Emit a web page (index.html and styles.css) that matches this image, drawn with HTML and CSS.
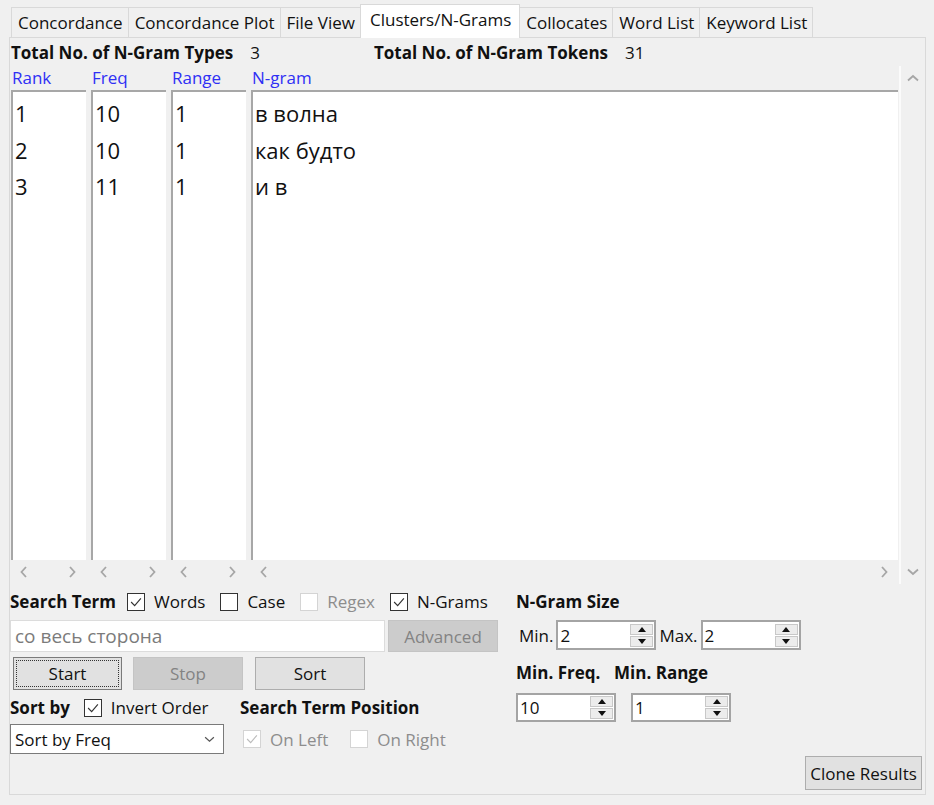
FILE: index.html
```html
<!DOCTYPE html>
<html>
<head>
<meta charset="utf-8">
<title>Clusters/N-Grams</title>
<link rel="stylesheet" href="styles.css">
</head>
<body>
<div class="app">
  <div class="tabs">
    <div class="tab">Concordance</div>
    <div class="tab">Concordance Plot</div>
    <div class="tab">File View</div>
    <div class="tab active">Clusters/N-Grams</div>
    <div class="tab">Collocates</div>
    <div class="tab">Word List</div>
    <div class="tab">Keyword List</div>
  </div>

  <div class="panel">
    <div class="stats">
      <div class="stat stat-types"><span class="b">Total No. of N-Gram Types</span><span>3</span></div>
      <div class="stat"><span class="b">Total No. of N-Gram Tokens</span><span>31</span></div>
    </div>

    <div class="results">
      <div class="col col-narrow">
        <div class="colhead">Rank</div>
        <div class="list">
          <div class="row">1</div><div class="row">2</div><div class="row">3</div>
        </div>
        <div class="hscroll">
          <svg class="chev" viewBox="0 0 8 12"><path d="M6 1L1.5 6L6 11"/></svg>
          <svg class="chev" viewBox="0 0 8 12"><path d="M2 1L6.5 6L2 11"/></svg>
        </div>
      </div>
      <div class="col col-narrow">
        <div class="colhead">Freq</div>
        <div class="list">
          <div class="row">10</div><div class="row">10</div><div class="row">11</div>
        </div>
        <div class="hscroll">
          <svg class="chev" viewBox="0 0 8 12"><path d="M6 1L1.5 6L6 11"/></svg>
          <svg class="chev" viewBox="0 0 8 12"><path d="M2 1L6.5 6L2 11"/></svg>
        </div>
      </div>
      <div class="col col-narrow">
        <div class="colhead">Range</div>
        <div class="list">
          <div class="row">1</div><div class="row">1</div><div class="row">1</div>
        </div>
        <div class="hscroll">
          <svg class="chev" viewBox="0 0 8 12"><path d="M6 1L1.5 6L6 11"/></svg>
          <svg class="chev" viewBox="0 0 8 12"><path d="M2 1L6.5 6L2 11"/></svg>
        </div>
      </div>
      <div class="col col-wide">
        <div class="colhead">N-gram</div>
        <div class="list">
          <div class="row">в волна</div><div class="row">как будто</div><div class="row">и в</div>
        </div>
        <div class="hscroll">
          <svg class="chev" viewBox="0 0 8 12"><path d="M6 1L1.5 6L6 11"/></svg>
          <svg class="chev" viewBox="0 0 8 12"><path d="M2 1L6.5 6L2 11"/></svg>
        </div>
      </div>
      <div class="vscroll">
        <svg class="vchev" viewBox="0 0 12 8"><path d="M1 6.5L6 2L11 6.5"/></svg>
        <svg class="vchev" viewBox="0 0 12 8"><path d="M1 1.5L6 6L11 1.5"/></svg>
      </div>
    </div>

    <div class="controls">
      <div class="left">
        <div class="line line-search">
          <span class="b">Search Term</span>
          <label class="check on"><span class="box"><svg viewBox="0 0 18 18"><path d="M3.5 9L7.5 13L14.5 5"/></svg></span>Words</label>
          <label class="check"><span class="box"></span>Case</label>
          <label class="check disabled"><span class="box"></span>Regex</label>
          <label class="check on"><span class="box"><svg viewBox="0 0 18 18"><path d="M3.5 9L7.5 13L14.5 5"/></svg></span>N-Grams</label>
        </div>
        <div class="line line-input">
          <div class="textbox">со весь сторона</div>
          <div class="btn btn-disabled btn-adv">Advanced</div>
        </div>
        <div class="line line-buttons">
          <div class="btn btn-focus"><span class="focusring">Start</span></div>
          <div class="btn btn-disabled">Stop</div>
          <div class="btn">Sort</div>
        </div>
        <div class="line line-sort">
          <div class="sortgroup">
            <span class="b">Sort by</span>
            <label class="check on"><span class="box"><svg viewBox="0 0 18 18"><path d="M3.5 9L7.5 13L14.5 5"/></svg></span>Invert Order</label>
          </div>
          <span class="b">Search Term Position</span>
        </div>
        <div class="line line-select">
          <div class="select">Sort by Freq<svg class="selchev" viewBox="0 0 12 8"><path d="M1 1.5L6 6L11 1.5"/></svg></div>
          <label class="check on disabled"><span class="box"><svg viewBox="0 0 18 18"><path d="M3.5 9L7.5 13L14.5 5"/></svg></span>On Left</label>
          <label class="check disabled"><span class="box"></span>On Right</label>
        </div>
      </div>

      <div class="right">
        <div class="line line-title"><span class="b">N-Gram Size</span></div>
        <div class="line line-size">
          <span class="lbl">Min.</span>
          <div class="spin"><span class="val">2</span><span class="arrows"><span class="arr up"></span><span class="arr down"></span></span></div>
          <span class="lbl">Max.</span>
          <div class="spin"><span class="val">2</span><span class="arrows"><span class="arr up"></span><span class="arr down"></span></span></div>
        </div>
        <div class="line line-title2">
          <span class="b lbl-freq">Min. Freq.</span>
          <span class="b">Min. Range</span>
        </div>
        <div class="line line-min">
          <div class="spin"><span class="val">10</span><span class="arrows"><span class="arr up"></span><span class="arr down"></span></span></div>
          <div class="spin"><span class="val">1</span><span class="arrows"><span class="arr up"></span><span class="arr down"></span></span></div>
        </div>
      </div>
    </div>

    <div class="footer">
      <div class="btn btn-clone">Clone Results</div>
    </div>
  </div>
</div>
</body>
</html>
```

FILE: styles.css
```css
* { box-sizing: border-box; }

html, body {
  margin: 0;
  padding: 0;
  background: #f0f0f0;
}

body {
  font-family: "Open Sans", "Noto Sans", "DejaVu Sans", sans-serif;
  font-size: 17px;
  color: #111;
  width: 934px;
  height: 805px;
  overflow: hidden;
}

.app {
  padding: 0 8px 0 9px;
}

.b {
  font-weight: 700;
  white-space: nowrap;
  flex: none;
}

/* ---------- tabs ---------- */
.tabs {
  display: flex;
  align-items: flex-end;
  height: 37px;
  padding-left: 2px;
}

.tab {
  height: 30px;
  padding: 0 5px 0 6px;
  line-height: 30px;
  border: 1px solid #d9d9d9;
  border-bottom: none;
  border-right: none;
  background: #f0f0f0;
  white-space: nowrap;
}

.tab:last-child { border-right: 1px solid #d9d9d9; }

.tab.active {
  height: 34px;
  line-height: 29px;
  background: #fff;
  border-color: #d9d9d9;
  border-right: 1px solid #d9d9d9;
  margin-bottom: -1px;
  position: relative;
  z-index: 1;
  padding: 0 8px 4px 9px;
}

.tab.active + .tab { border-left: none; }

/* ---------- panel ---------- */
.panel {
  height: 758px;
  border: 1px solid #d9d9d9;
  display: flex;
  flex-direction: column;
}

.stats {
  display: flex;
  height: 28px;
  align-items: center;
  padding-left: 1px;
}

.stat {
  display: flex;
  gap: 17px;
}

.stat-types { width: 363px; }

/* ---------- results ---------- */
.results {
  display: flex;
  padding-left: 1px;
  height: 518px;
}

.col {
  display: flex;
  flex-direction: column;
  margin-right: 5px;
}

.col-narrow { width: 75px; }
.col-wide { width: 647px; margin-right: 1px; }

.colhead {
  height: 24px;
  line-height: 24px;
  color: #2f2ff5;
  padding-left: 1px;
}

.list {
  flex: 1;
  background: #fff;
  border-top: 2px solid #a7a7a7;
  border-left: 2px solid #a7a7a7;
  padding-top: 3px;
  padding-left: 2px;
  font-size: 22px;
}

.row {
  height: 36.5px;
  line-height: 36px;
  white-space: nowrap;
}

.hscroll {
  height: 24px;
  display: flex;
  justify-content: space-between;
  align-items: center;
  padding: 0 10px 0 9px;
}

.chev {
  width: 8px;
  height: 12px;
  fill: none;
  stroke: #a6a6a6;
  stroke-width: 1.8;
}

.vscroll {
  width: 25px;
  border-left: 2px solid #fbfbfb;
  display: flex;
  flex-direction: column;
  justify-content: space-between;
  align-items: center;
  padding: 8px 0 8px 0;
}

.vchev {
  width: 12px;
  height: 8px;
  fill: none;
  stroke: #a6a6a6;
  stroke-width: 1.8;
}

/* ---------- controls ---------- */
.controls {
  display: flex;
  padding-top: 7px;
}

.left {
  width: 489px;
  flex: none;
  display: flex;
  flex-direction: column;
}

.right {
  margin-left: 17px;
  display: flex;
  flex-direction: column;
}

.line {
  display: flex;
  align-items: center;
}

.line-search { height: 21px; }
.line-search .b { margin-right: 11px; }
.line-search .check { margin-right: 15px; }

.check {
  display: inline-flex;
  align-items: center;
  gap: 9px;
  white-space: nowrap;
  flex: none;
}

.box {
  width: 18px;
  height: 18px;
  border: 1px solid #333;
  background: #fff;
  display: inline-flex;
  flex: none;
}

.box svg {
  width: 16px;
  height: 16px;
  fill: none;
  stroke: #333;
  stroke-width: 1.3;
}

.check.disabled { color: #8d8d8d; }
.check.disabled .box { border-color: #d4d4d4; }
.check.disabled .box svg { stroke: #bcbcbc; }

.line-input {
  margin-top: 8px;
  height: 32px;
  gap: 3px;
}

.textbox {
  width: 375px;
  height: 32px;
  background: #fff;
  border: 1px solid #dcdcdc;
  color: #7b7b7b;
  font-size: 19px;
  line-height: 30px;
  padding-left: 4px;
  white-space: nowrap;
}

.btn {
  height: 33px;
  width: 110px;
  background: #e1e1e1;
  border: 1px solid #adadad;
  display: flex;
  align-items: center;
  justify-content: center;
  white-space: nowrap;
  flex: none;
}

.btn-disabled {
  background: #cccccc;
  border-color: #c4c4c4;
  color: #838383;
}

.btn-adv { height: 32px; }

.line-buttons {
  margin-top: 5px;
  height: 33px;
  gap: 11px;
  padding-left: 3px;
}

.line-buttons .btn:nth-child(2) { margin-right: 1px; }

.btn-focus {
  width: 109px;
  border-color: #7a7a7a;
  padding: 2px;
}

.focusring {
  width: 100%;
  height: 100%;
  border: 1px dotted #333;
  display: flex;
  align-items: center;
  justify-content: center;
}

.line-sort {
  margin-top: 7px;
  height: 21px;
}

.sortgroup {
  width: 230px;
  display: flex;
  align-items: center;
  gap: 14px;
}

.line-select {
  margin-top: 6px;
  height: 30px;
}

.select {
  width: 214px;
  height: 30px;
  border: 1px solid #7a7a7a;
  background: #fff;
  display: flex;
  align-items: center;
  justify-content: space-between;
  padding: 0 8px 0 4px;
  margin-right: 19px;
  white-space: nowrap;
  flex: none;
}

.selchev {
  width: 11px;
  height: 7px;
  fill: none;
  stroke: #555;
  stroke-width: 1.4;
}

.line-select .check { margin-right: 22px; }

/* ---------- right side ---------- */
.line-title { height: 21px; }

.line-size {
  margin-top: 8px;
  height: 30px;
  gap: 3px;
  padding-left: 3px;
}

.spin {
  width: 100px;
  height: 30px;
  border: 2px solid #a4a4a4;
  background: #fff;
  display: flex;
  align-items: center;
  justify-content: space-between;
  padding-left: 2px;
  flex: none;
}

.arrows {
  display: flex;
  flex-direction: column;
  gap: 1px;
  margin-right: 1px;
}

.arr {
  width: 23px;
  height: 11px;
  background: #ececec;
  border: 1px solid #c8c8c8;
  display: flex;
  align-items: center;
  justify-content: center;
}

.arr::after {
  content: "";
  width: 0;
  height: 0;
  border-left: 4px solid transparent;
  border-right: 4px solid transparent;
}

.arr.up::after { border-bottom: 5px solid #111; }
.arr.down::after { border-top: 5px solid #111; }

.line-title2 {
  margin-top: 12px;
  height: 21px;
}

.lbl-freq { width: 98px; }

.line-min {
  margin-top: 10px;
  height: 29px;
  gap: 15px;
}

.line-min .spin { height: 29px; }

/* ---------- footer ---------- */
.footer {
  margin-top: auto;
  display: flex;
  justify-content: flex-end;
  padding: 0 3px 4px 0;
}

.btn-clone {
  width: 117px;
  height: 34px;
}
```
